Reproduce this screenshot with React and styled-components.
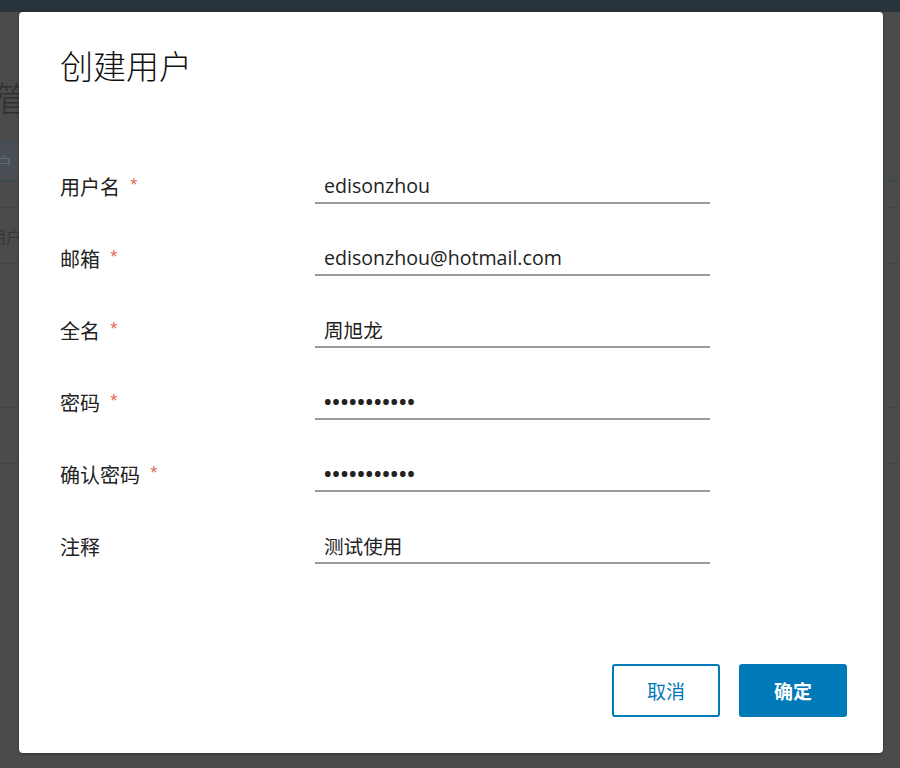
import React from "react";
import styled, { createGlobalStyle } from "styled-components";

const GlobalStyle = createGlobalStyle`
  html, body {
    margin: 0;
    padding: 0;
  }
  body {
    background: #4b4b4b;
    font-family: "Open Sans", "Noto Sans CJK SC", sans-serif;
  }
`;

const fields = [
  { label: "用户名", required: true, value: "edisonzhou" },
  { label: "邮箱", required: true, value: "edisonzhou@hotmail.com" },
  { label: "全名", required: true, value: "周旭龙" },
  { label: "密码", required: true, value: "edison12345", type: "password" },
  { label: "确认密码", required: true, value: "edison12345", type: "password" },
  { label: "注释", required: false, value: "测试使用" },
];

const App = () => {
  return (
    <Page>
      <GlobalStyle />
      <TopBar />
      <Main>
        <PageTitle>用户管理</PageTitle>
        <Tabs>
          <Tab active>用户</Tab>
        </Tabs>
        <Table>
          <HeadRow>用户名</HeadRow>
          <BodyRow height={144} />
          <BodyRow height={56} />
        </Table>
      </Main>

      <Modal>
        <ModalTitle>创建用户</ModalTitle>
        <Form onSubmit={(e) => e.preventDefault()}>
          {fields.map((f) => (
            <React.Fragment key={f.label}>
              <Label>
                {f.label}
                {f.required && <Required>*</Required>}
              </Label>
              <Input
                type={f.type || "text"}
                masked={f.type === "password"}
                defaultValue={f.value}
              />
            </React.Fragment>
          ))}
        </Form>
        <Footer>
          <Button type="button">取消</Button>
          <Button type="button" primary>
            确定
          </Button>
        </Footer>
      </Modal>
    </Page>
  );
};

const Page = styled.div`
  position: relative;
  width: 900px;
  height: 768px;
  overflow: hidden;
  background: #4b4b4b;
`;

const TopBar = styled.header`
  height: 12px;
  background: #28333b;
`;

const Main = styled.main`
  margin-left: -72px;
  padding-top: 66px;
`;

const PageTitle = styled.h1`
  margin: 0;
  font: 300 34px/40px "Noto Sans CJK SC", sans-serif;
  color: #303030;
`;

const Tabs = styled.div`
  display: flex;
  margin-top: 24px;
  height: 37px;
  border-top: 1px solid #404b54;
  border-bottom: 2px solid #3c4a50;
`;

const Tab = styled.div`
  display: flex;
  align-items: center;
  margin-left: 40px;
  padding: 0 12px;
  font: 16px "Noto Sans CJK SC", sans-serif;
  color: ${(p) => (p.active ? "#5a6e7e" : "#3a3a3a")};
  background: ${(p) => (p.active ? "#4a4f55" : "transparent")};
`;

const Table = styled.div`
  margin-top: 25px;
  border-top: 1px solid #444;
`;

const HeadRow = styled.div`
  height: 55px;
  display: flex;
  align-items: center;
  padding-left: 62px;
  font: 16px "Noto Sans CJK SC", sans-serif;
  color: #363636;
  border-bottom: 1px solid #444;
`;

const BodyRow = styled.div`
  height: ${(p) => p.height - 1}px;
  border-bottom: 1px solid #444;
`;

const Modal = styled.div`
  position: absolute;
  left: 19px;
  top: 12px;
  width: 864px;
  height: 741px;
  box-sizing: border-box;
  padding: 33px 36px 36px 41px;
  display: flex;
  flex-direction: column;
  background: #fff;
  border-radius: 4px;
  box-shadow: 0 1px 3px rgba(0, 0, 0, 0.35);
`;

const ModalTitle = styled.h2`
  margin: 0;
  font: 300 33px/40px "Noto Sans CJK SC", sans-serif;
  color: #111;
`;

const Form = styled.form`
  margin-top: 83px;
  display: grid;
  grid-template-columns: 255px 395px;
  grid-auto-rows: 36px;
  row-gap: 36px;
`;

const Label = styled.label`
  display: flex;
  align-items: center;
  font: 20px "Noto Sans CJK SC", sans-serif;
  color: #222;
`;

const Required = styled.span`
  margin-left: 10px;
  margin-bottom: 6px;
  font: 14px "Open Sans", sans-serif;
  color: #e0624f;
`;

const Input = styled.input`
  height: 36px;
  box-sizing: border-box;
  padding: 0 9px;
  border: none;
  border-bottom: 2px solid #9a9a9a;
  background: transparent;
  font: ${(p) => (p.masked ? "700 20px" : "400 19.6px")} "Open Sans",
    "Noto Sans CJK SC", sans-serif;
  letter-spacing: ${(p) => (p.masked ? "0.8px" : "0")};
  color: #222;
  outline: none;
`;

const Footer = styled.div`
  margin-top: auto;
  display: flex;
  justify-content: flex-end;
  gap: 19px;
`;

const Button = styled.button`
  width: 108px;
  height: 53px;
  box-sizing: border-box;
  border: 2px solid #0079b8;
  border-radius: 3px;
  background: ${(p) => (p.primary ? "#0079b8" : "#fff")};
  color: ${(p) => (p.primary ? "#fff" : "#0079b8")};
  font: ${(p) => (p.primary ? 700 : 400)} 19px "Noto Sans CJK SC", sans-serif;
  cursor: pointer;
`;

export default App;
